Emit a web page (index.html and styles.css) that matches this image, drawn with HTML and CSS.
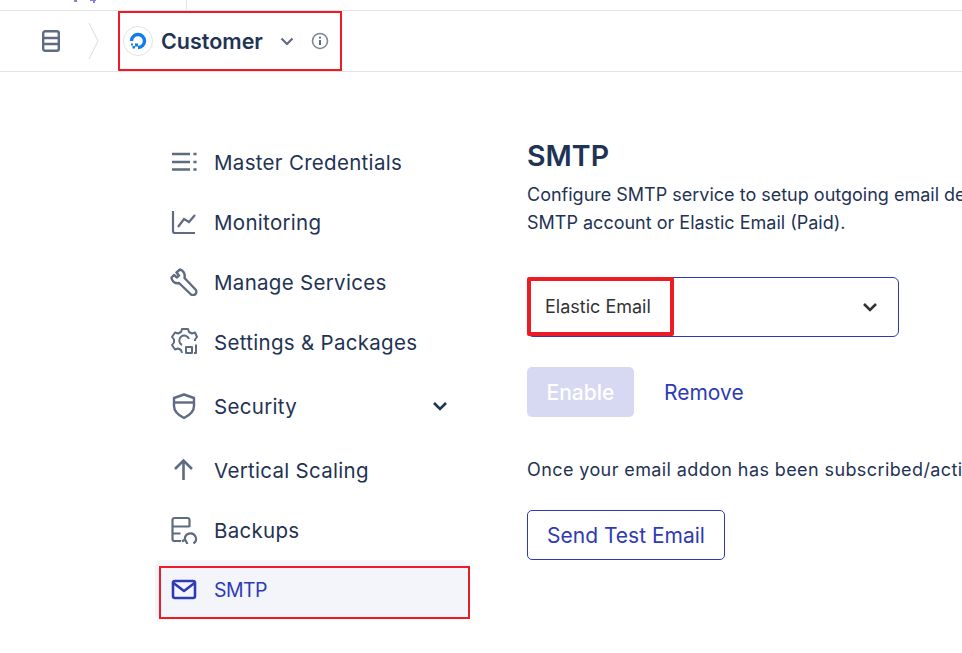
FILE: index.html
```html
<!DOCTYPE html>
<html lang="en">
<head>
    <meta charset="UTF-8" />
    <meta name="viewport" content="width=device-width, initial-scale=1.0" />
    <title>Customer - SMTP</title>
    <link rel="stylesheet" href="styles.css">
</head>
<body>
    <div class="topstrip">
        <svg class="topstrip-logo" width="30" height="4" viewBox="0 0 30 4"><path d="M2 0h3v2H2zM18 0h6v1h-1v2h-2V1h-3z" fill="#4a4fc4" opacity="0.7"/></svg>
        <span class="topstrip-divider"></span>
    </div>

    <header class="appbar">
        <svg class="server-icon" width="20" height="24" viewBox="0 0 20 24" fill="none" stroke="#5f6b82" stroke-width="2.400">
            <rect x="2.200" y="2.200" width="15.600" height="19.600" rx="2"/>
            <path d="M2.200 9h15.600M2.200 15h15.600"/>
        </svg>
        <svg class="crumb-arrow" width="12" height="38" viewBox="0 0 12 38" fill="none" stroke="#dcdcdc" stroke-width="1"><path d="M1 1l9 18-9 18"/></svg>
        <div class="crumb">
            <span class="crumb-logo">
                <svg width="20" height="20" viewBox="0 0 20 20" fill="none">
                    <path d="M10 16.500a6.500 6.500 0 1 0-6.500-6.500" stroke="#0f7cf0" stroke-width="3.400"/>
                    <path d="M7 12.500h3v3H7zM4.500 15h2.500v2.500H4.500zM3 12.500h2v2H3z" fill="#0f7cf0"/>
                </svg>
            </span>
            <span class="crumb-title">Customer</span>
            <svg class="crumb-chevron" width="14" height="9" viewBox="0 0 14 9" fill="none" stroke="#5f6b82" stroke-width="2.200"><path d="M1.500 1.500L7 7l5.500-5.500"/></svg>
            <svg width="18" height="18" viewBox="0 0 18 18" fill="none" stroke="#7f8797" stroke-width="1.600">
                <circle cx="9" cy="9" r="7.500"/>
                <path d="M9 8v5M9 4.800v1.700" stroke="#5f6b82" stroke-width="2"/>
            </svg>
        </div>
    </header>

    <div class="content">
        <nav class="sidenav">
            <a class="nav-item">
                <svg class="nav-icon" width="28" height="28" viewBox="0 0 28 28" fill="none" stroke="#5f6b82" stroke-width="2.600">
                    <path d="M2 6h18M2 14h18M2 21.500h18"/>
                    <path d="M25 4.800v2.400M25 12.800v2.400M25 20.300v2.400" stroke-width="3.200"/>
                </svg>
                <span>Master Credentials</span>
            </a>
            <a class="nav-item">
                <svg class="nav-icon" width="28" height="28" viewBox="0 0 28 28" fill="none" stroke="#5f6b82" stroke-width="2.200">
                    <path d="M3 3v20a2 2 0 0 0 2 2h20"/>
                    <path d="M8 19l6-8 5 3 6-7"/>
                </svg>
                <span>Monitoring</span>
            </a>
            <a class="nav-item">
                <svg class="nav-icon" width="28" height="28" viewBox="0 0 28 28" fill="none" stroke="#5f6b82" stroke-width="2.400" stroke-linejoin="round">
                    <path d="M10 1.500l-3.500 3 2.500 3-2 2-3-2.500L1.500 9.500c0 3.500 3.500 6.500 7.500 5.500L20.500 26a2 2 0 0 0 5-4.500L14.500 10C15.500 6 13 2 10 1.500z"/>
                </svg>
                <span>Manage Services</span>
            </a>
            <a class="nav-item">
                <svg class="nav-icon" width="28" height="28" viewBox="0 0 28 28" fill="none" stroke="#5f6b82" stroke-width="2" stroke-linejoin="round">
                    <path d="M12 25l-1-3-3-1.500-3 1-3-4.500 2-2.500v-3L2 9l3-4.500 3 1L11 4l1-3h6l1 3 3 1.500 3-1L27 9l-2 2.500V13"/>
                    <path d="M12 17a5 5 0 1 1 7-6"/>
                    <rect x="16" y="19" width="6" height="6"/>
                    <path d="M26 16.500V25h-2"/>
                </svg>
                <span>Settings &amp; Packages</span>
            </a>
            <a class="nav-item nav-security">
                <svg class="nav-icon" width="28" height="28" viewBox="0 0 28 28" fill="none" stroke="#5f6b82" stroke-width="2.400" stroke-linejoin="round">
                    <path d="M14 2.500l10 3.500v8c0 6-4 9-10 12C8 23 4 20 4 14V6z"/>
                    <path d="M4 10.500h20"/>
                </svg>
                <span>Security</span>
                <svg class="nav-caret" width="16" height="10" viewBox="0 0 16 10" fill="none" stroke="#1f3354" stroke-width="2.600"><path d="M2 2l6 6 6-6"/></svg>
            </a>
            <a class="nav-item nav-scaling">
                <svg class="nav-icon" width="28" height="28" viewBox="0 0 28 28" fill="none" stroke="#5f6b82" stroke-width="2.600">
                    <path d="M13.500 24V5.500M5 13L13.500 4.500 22 13"/>
                </svg>
                <span>Vertical Scaling</span>
            </a>
            <a class="nav-item">
                <svg class="nav-icon" width="28" height="28" viewBox="0 0 28 28" fill="none" stroke="#5f6b82" stroke-width="2.200">
                    <path d="M11 25H4.500a2 2 0 0 1-2-2V4a2 2 0 0 1 2-2h13a2 2 0 0 1 2 2v7M2.500 10.500h17M2.500 17.500h8"/>
                    <path d="M15 23.500a5.500 5.500 0 1 1 8.500 4M17.500 28l-2.500-4.500-3 2" stroke-width="2.200"/>
                </svg>
                <span>Backups</span>
            </a>
            <a class="nav-item nav-active">
                <svg class="nav-icon" width="28" height="28" viewBox="0 0 28 28" fill="none" stroke="#2f3bb5" stroke-width="2.600" stroke-linejoin="round">
                    <rect x="3" y="5" width="22" height="17" rx="2"/>
                    <path d="M3.500 7l10.500 8 10.500-8"/>
                </svg>
                <span>SMTP</span>
            </a>
        </nav>

        <main class="panel">
            <h2>SMTP</h2>
            <p class="intro">Configure SMTP service to setup outgoing email de<br>SMTP account or Elastic Email (Paid).</p>

            <div class="select-box">
                <span class="select-value">Elastic Email</span>
                <svg width="16" height="10" viewBox="0 0 16 10" fill="none" stroke="#333" stroke-width="2.600"><path d="M2 2l6 6 6-6"/></svg>
            </div>

            <div class="actions">
                <button class="btn-enable">Enable</button>
                <a class="link-remove">Remove</a>
            </div>

            <p class="note">Once your email addon has been subscribed/acti</p>

            <button class="btn-outline">Send Test Email</button>
        </main>
    </div>
</body>
</html>
```

FILE: styles.css
```css
html, body {
    margin: 0;
    height: 653px;
    overflow: hidden;
    background: #fff;
}
body {
    font-family: "Inter", "Open Sans", sans-serif;
    color: #1f3354;
}
.topstrip {
    display: flex;
    height: 10px;
    border-bottom: 1px solid #e3e3e3;
}
.topstrip-logo {
    margin-left: 72px;
}
.topstrip-divider {
    width: 1px;
    margin-left: 84px;
    background: #e3e3e3;
}
.appbar {
    display: flex;
    align-items: center;
    height: 60px;
    border-bottom: 1px solid #e3e3e3;
}
.server-icon {
    margin-left: 41px;
}
.crumb-arrow {
    margin-left: 27px;
}
.crumb {
    display: flex;
    align-items: center;
    box-sizing: border-box;
    width: 224px;
    height: 60px;
    margin-left: 18px;
    padding-left: 3px;
    border: 2px solid #ed1c24;
}
.crumb-logo {
    display: flex;
    align-items: center;
    justify-content: center;
    width: 28px;
    height: 28px;
    border: 1px solid #e3e3e3;
    border-radius: 50%;
}
.crumb-title {
    margin-left: 8px;
    font-size: 21.5px;
    font-weight: 600;
}
.crumb-chevron {
    margin-left: 17px;
    margin-right: 17px;
}
.content {
    display: flex;
    padding: 60px 0 0 155px;
}
.sidenav {
    width: 315px;
    flex-shrink: 0;
}
.nav-item {
    display: flex;
    align-items: center;
    height: 60px;
    padding-left: 15px;
    font-size: 20.5px;
    letter-spacing: 0.3px;
    color: #1f3354;
}
.nav-item span {
    margin-left: 16px;
}
.nav-security {
    height: 68px;
}
.nav-caret {
    margin-left: auto;
    margin-right: 22px;
}
.nav-active {
    position: relative;
    margin-right: 3px;
    border-radius: 6px;
    background: #f4f5fb;
    font-size: 19.5px;
    letter-spacing: -0.6px;
    color: #2f3bb5;
}
/* annotation frame drawn on top of the row */
.nav-active::after {
    content: "";
    position: absolute;
    top: 6px;
    left: 4px;
    right: -3px;
    height: 53px;
    box-sizing: border-box;
    border: 2px solid #ed1c24;
}
.panel {
    margin-left: 57px;
    min-width: 0;
    white-space: nowrap;
}
.panel h2 {
    margin: 4px 0 0;
    font-size: 28.5px;
    font-weight: 600;
    line-height: 40px;
}
.intro {
    margin: 5px 0 0;
    font-size: 18px;
    line-height: 28px;
}
.select-box {
    display: flex;
    align-items: flex-start;
    justify-content: space-between;
    box-sizing: border-box;
    width: 372px;
    height: 60px;
    margin-top: 40px;
    padding-right: 20px;
    border: 1px solid #2f3bb5;
    border-radius: 6px;
    background: #fff;
}
.select-box svg {
    margin-top: 24px;
}
.select-value {
    display: flex;
    align-items: center;
    box-sizing: border-box;
    width: 147px;
    height: 59px;
    margin: -1px 0 0 -1px;
    padding-left: 14px;
    border: 4px solid #ed1c24;
    border-radius: 2px;
    font-size: 18px;
    color: #333;
}
.actions {
    display: flex;
    align-items: center;
    margin-top: 30px;
}
.btn-enable {
    width: 107px;
    height: 50px;
    border: none;
    border-radius: 5px;
    background: #d7d9f2;
    color: #fff;
    font: inherit;
    font-size: 21px;
    font-weight: 500;
}
.link-remove {
    margin-left: 30px;
    font-size: 21px;
    color: #2f3bb5;
}
.note {
    margin: 39px 0 0;
    font-size: 18px;
    letter-spacing: 0.4px;
    line-height: 28px;
}
.btn-outline {
    display: block;
    width: 198px;
    height: 50px;
    margin-top: 26px;
    border: 1px solid #2f3bb5;
    border-radius: 5px;
    background: #fff;
    color: #2f3bb5;
    font: inherit;
    font-size: 21px;
}
```
